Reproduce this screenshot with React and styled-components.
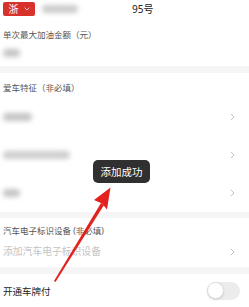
import React from "react";
import styled, { createGlobalStyle } from "styled-components";

const GlobalStyle = createGlobalStyle`
  body {
    margin: 0;
    background: #fff;
    font-family: "Noto Sans", "Noto Sans CJK SC", sans-serif;
  }
`;

const Page = styled.div`
  position: relative;
  width: 249px;
  height: 307px;
  overflow: hidden;
  display: flex;
  flex-direction: column;
  background: #fff;
`;

const Header = styled.div`
  height: 18px;
  display: flex;
  align-items: center;
  padding-left: 3px;
`;

const Province = styled.div`
  width: 32px;
  height: 14px;
  margin-top: -1px;
  background: #d7322b;
  border-radius: 2px;
  display: flex;
  align-items: center;
  justify-content: center;
  gap: 5px;
  color: #fff;
  font-size: 10px;
  line-height: 14px;
`;

const Redacted = styled.div`
  width: ${(p) => p.$w}px;
  height: ${(p) => p.$h || 7}px;
  margin-left: ${(p) => p.$ml || 0}px;
  background: ${(p) => p.$c || "#c4c4c4"};
  border-radius: 4px;
  filter: blur(2.4px);
`;

const Grade = styled.div`
  margin-left: 54px;
  font-size: 10px;
  color: #222;
  line-height: 14px;
`;

const Section = styled.div`
  display: flex;
  flex-direction: column;
  padding: ${(p) => p.$pad};
`;

const Label = styled.div`
  font-size: 8.5px;
  line-height: 14px;
  color: #555;
  margin-bottom: ${(p) => p.$mb || 0}px;
  padding-left: 3px;
`;

const ValueLine = styled.div`
  height: 14px;
  display: flex;
  align-items: center;
  padding-left: 3px;
`;

const Band = styled.div`
  height: ${(p) => p.$h || 7}px;
  background: #f5f5f5;
`;

const Row = styled.div`
  height: ${(p) => p.$h || 38}px;
  display: flex;
  align-items: center;
  justify-content: space-between;
  padding: 0 14px 0 3px;
`;

const Placeholder = styled.span`
  font-size: 9.8px;
  color: #c4c4c4;
  line-height: 14px;
`;

const SwitchLabel = styled.span`
  font-size: 9.5px;
  color: #222;
`;

const Switch = styled.div`
  width: 33px;
  height: 18px;
  margin-right: -5px;
  border-radius: 9px;
  background: #ececec;
  display: flex;
  align-items: center;
`;

const Knob = styled.div`
  width: 17px;
  height: 17px;
  border-radius: 50%;
  background: #fff;
  border: 1px solid #dcdcdc;
  box-sizing: border-box;
  box-shadow: 0 1px 2px rgba(0, 0, 0, 0.12);
`;

const Toast = styled.div`
  position: absolute;
  left: 93px;
  top: 160px;
  width: 57px;
  height: 23px;
  border-radius: 5px;
  background: #303030;
  color: #fff;
  font-size: 10.5px;
  display: flex;
  align-items: center;
  justify-content: center;
`;

const Overlay = styled.svg`
  position: absolute;
  left: 0;
  top: 0;
  pointer-events: none;
`;

const Chevron = () => (
  <svg width="5" height="8" viewBox="0 0 5 8">
    <polyline points="0.8,0.8 4,4 0.8,7.2" fill="none" stroke="#b5b5b5" strokeWidth="0.8" />
  </svg>
);

const DownMark = () => (
  <svg width="6" height="4" viewBox="0 0 6 4">
    <polyline points="0.6,0.6 3,3 5.4,0.6" fill="none" stroke="#fbd0cd" strokeWidth="0.9" />
  </svg>
);

export default function App() {
  return (
    <>
      <GlobalStyle />
      <Page>
        <Header>
          <Province>
            <span>浙</span>
            <DownMark />
          </Province>
          <Redacted $w={36} $h={8} $ml={7} $c="#cbcbcb" />
          <Grade>95号</Grade>
        </Header>

        <Section $pad="10px 0 6px">
          <Label $mb={4}>单次最大加油金额（元）</Label>
          <ValueLine>
            <Redacted $w={17} $h={8} />
          </ValueLine>
        </Section>
        <Band />

        <Section $pad="8px 0 0">
          <Label $mb={3}>爱车特征（非必填）</Label>
          <Row>
            <Redacted $w={29} $h={8} />
            <Chevron />
          </Row>
          <Row>
            <Redacted $w={67} $h={8} $c="#cdcdcd" />
            <Chevron />
          </Row>
          <Row>
            <Redacted $w={17} $h={8} />
            <Chevron />
          </Row>
        </Section>
        <Band $h={6} />

        <Section $pad="6px 0 8px">
          <Label $mb={7}>汽车电子标识设备 (非必填)</Label>
          <Row $h={14}>
            <Placeholder>添加汽车电子标识设备</Placeholder>
            <Chevron />
          </Row>
        </Section>
        <Band />

        <Row $h={33}>
          <SwitchLabel>开通车牌付</SwitchLabel>
          <Switch>
            <Knob />
          </Switch>
        </Row>

        <Toast>添加成功</Toast>

        <Overlay width="249" height="307" viewBox="0 0 249 307">
          <path d="M54 281 L101 203 L104 205 L55.5 282 Z" fill="#e3211d" />
          <polygon points="110.5,187.5 107,209.5 102,203.5 94,200" fill="#e3211d" />
        </Overlay>
      </Page>
    </>
  );
}
